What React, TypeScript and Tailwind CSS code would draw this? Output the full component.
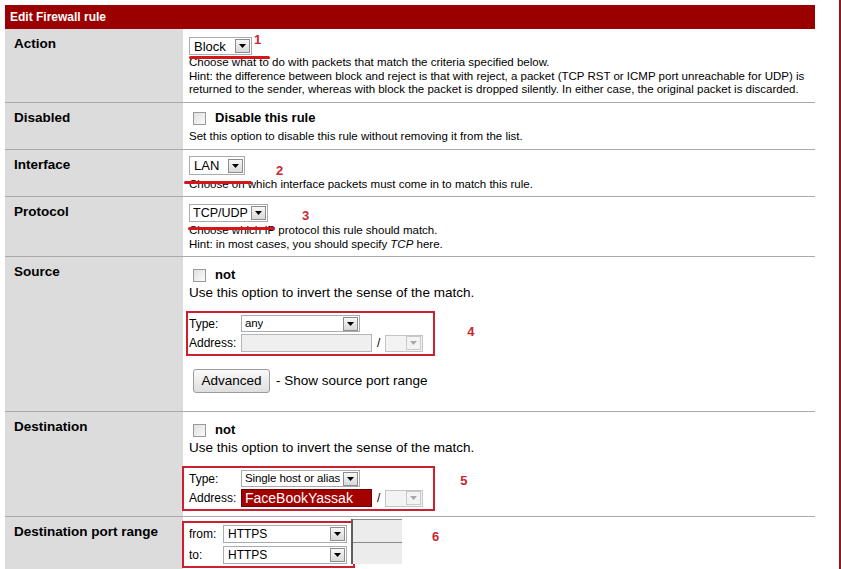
import React from 'react';

const Arrow: React.FC<{ disabled?: boolean }> = ({ disabled }) => (
  <div
    className={`flex h-[14px] w-[15px] shrink-0 items-center justify-center border ${
      disabled ? 'border-[#c9c9c9] bg-[#f3f3f3]' : 'border-[#8d8d8d] bg-gradient-to-b from-[#f7f7f7] to-[#d9d9d9]'
    }`}
  >
    <svg width="7" height="4" viewBox="0 0 7 4">
      <path d="M0 0h7L3.5 4z" fill={disabled ? '#a8a8a8' : '#000'} />
    </svg>
  </div>
);

const Select: React.FC<{ value: string; className: string; text?: string }> = ({ value, className, text = 'text-[13px]' }) => (
  <div className={`flex items-center justify-between border border-[#a5acb2] bg-white pl-[4px] pr-[1px] ${className}`}>
    <span className={`${text} leading-none text-black whitespace-nowrap overflow-hidden`}>{value}</span>
    <Arrow />
  </div>
);

const Checkbox: React.FC = () => (
  <div className="h-[13px] w-[13px] shrink-0 border border-[#9a9a9a] bg-gradient-to-br from-[#e0e0e0] to-[#fafafa]" />
);

const Note: React.FC<{ n: string; className: string }> = ({ n, className }) => (
  <span className={`text-[13px] font-bold leading-none text-[#c8262c] ${className}`}>{n}</span>
);

const Stroke: React.FC<{ className: string }> = ({ className }) => (
  <div className={`absolute h-[3px] rounded-full bg-[#d7161c] ${className}`} />
);

const Row: React.FC<{ label: string; h: string; children: React.ReactNode }> = ({ label, h, children }) => (
  <div className={`flex border-b border-[#a9a9a9] ${h}`}>
    <div className="w-[178px] shrink-0 bg-[#dcdcdc] pl-[9px] pt-[7px] text-[13.5px] font-bold leading-[16px] text-black">
      {label}
    </div>
    <div className="relative flex-1 pl-[6px]">{children}</div>
  </div>
);

const AddressBox: React.FC<{ type: string; address: string; filled?: boolean; box: string }> = ({ type, address, filled, box }) => (
  <div className={`flex flex-col gap-[2px] border-2 border-[#cf1f2e] py-[2px] pr-[10px] ${box}`}>
    <div className="flex items-center">
      <span className="w-[52px] text-[12px] leading-none">Type:</span>
      <Select value={type} className="h-[17px] w-[119px] !pl-[3px]" text="text-[11.5px] tracking-[-0.1px]" />
    </div>
    <div className="flex items-center">
      <span className="w-[52px] text-[12px] leading-none">Address:</span>
      <div
        className={`flex h-[18px] w-[131px] items-center border ${
          filled ? 'border-[#6d0000] bg-[#a30000]' : 'border-[#b5b5b5] bg-[#efefef]'
        } pl-[3px]`}
      >
        {filled && <span className="text-[14px] leading-none text-white">{address}</span>}
      </div>
      <span className="mx-[5px] text-[12px]">/</span>
      <div className="flex h-[17px] w-[38px] items-center justify-end border border-[#c4c4c4] bg-[#f3f3f3] pr-[1px]">
        <Arrow disabled />
      </div>
    </div>
  </div>
);

export default function App() {
  return (
    <div className="h-[569px] w-[841px] overflow-hidden border-r-2 border-[#8e1a1a] bg-white font-['Liberation_Sans',Arial,sans-serif] text-black">
      <div className="ml-[5px] mt-[5px] w-[810px]">
        <div className="flex h-[24px] items-center bg-[#9b0000] pl-[5px] text-[12px] font-bold text-white">
          Edit Firewall rule
        </div>

        <Row label="Action" h="h-[74px]">
          <div className="flex items-start pt-[8px]">
            <Select value="Block" className="h-[18px] w-[63px]" />
            <Note n="1" className="ml-[2px] -mt-[4px]" />
          </div>
          <Stroke className="left-[6px] top-[27px] w-[81px]" />
          <div className="whitespace-nowrap pt-[1px] text-[11.5px] leading-[13.5px]">
            <div>Choose what to do with packets that match the criteria specified below.</div>
            <div>Hint: the difference between block and reject is that with reject, a packet (TCP RST or ICMP port unreachable for UDP) is</div>
            <div>returned to the sender, whereas with block the packet is dropped silently. In either case, the original packet is discarded.</div>
          </div>
        </Row>

        <Row label="Disabled" h="h-[47px]">
          <div className="flex items-center gap-[9px] pl-[4px] pt-[8px]">
            <Checkbox />
            <span className="text-[13px] font-bold leading-[14px]">Disable this rule</span>
          </div>
          <div className="mt-[5px] text-[11.5px] leading-[13px]">Set this option to disable this rule without removing it from the list.</div>
        </Row>

        <Row label="Interface" h="h-[47px]">
          <div className="flex items-start pt-[6px]">
            <Select value="LAN" className="h-[19px] w-[56px]" />
            <Note n="2" className="ml-[31px] mt-[8px]" />
          </div>
          <Stroke className="left-[1px] top-[31px] w-[68px]" />
          <div className="mt-[1px] text-[11.5px] leading-[13px]">Choose on which interface packets must come in to match this rule.</div>
        </Row>

        <Row label="Protocol" h="h-[60px]">
          <div className="flex items-start pt-[7px]">
            <Select value="TCP/UDP" className="h-[18px] w-[79px] !pl-[3px]" text="text-[12.5px]" />
            <Note n="3" className="ml-[34px] mt-[5px]" />
          </div>
          <Stroke className="left-[5px] top-[30px] w-[87px]" />
          <div className="mt-[1px] text-[11.5px] leading-[14px]">
            <div>Choose which IP protocol this rule should match.</div>
            <div>
              Hint: in most cases, you should specify <i>TCP</i> here.
            </div>
          </div>
        </Row>

        <Row label="Source" h="h-[155px]">
          <div className="flex items-center gap-[9px] pl-[4px] pt-[11px]">
            <Checkbox />
            <span className="text-[13px] font-bold leading-[14px]">not</span>
          </div>
          <div className="mt-[3px] text-[13.5px] leading-[16px]">Use this option to invert the sense of the match.</div>
          <div className="mt-[10px] flex items-center">
            <AddressBox type="any" address="" box="-ml-[3px] pl-[1px]" />
            <Note n="4" className="ml-[32px] -mt-[4px]" />
          </div>
          <div className="mt-[13px] flex items-center pl-[4px]">
            <div className="flex h-[24px] w-[77px] items-center justify-center rounded-[3px] border border-[#9a9a9a] bg-gradient-to-b from-[#fafafa] to-[#dedede] text-[13.5px]">
              Advanced
            </div>
            <span className="ml-[6px] text-[13.5px]">- Show source port range</span>
          </div>
        </Row>

        <Row label="Destination" h="h-[105px]">
          <div className="flex items-center gap-[9px] pl-[4px] pt-[11px]">
            <Checkbox />
            <span className="text-[13px] font-bold leading-[14px]">not</span>
          </div>
          <div className="mt-[3px] text-[13.5px] leading-[16px]">Use this option to invert the sense of the match.</div>
          <div className="mt-[10px] flex items-center">
            <AddressBox type="Single host or alias" address="FaceBookYassak" filled box="-ml-[7px] pl-[5px]" />
            <Note n="5" className="ml-[25px] -mt-[16px]" />
          </div>
        </Row>

        <div className="flex h-[60px]">
          <div className="w-[178px] shrink-0 bg-[#dcdcdc] pl-[9px] pt-[7px] text-[13.5px] font-bold leading-[16px]">
            Destination port range
          </div>
          <div className="flex flex-1 items-start pl-[6px] pt-[4px]">
            <div className="-ml-[7px] flex flex-col gap-[3px] border-2 border-[#cf1f2e] py-[2px] pl-[5px] pr-[6px]">
              <div className="flex items-center">
                <span className="w-[34px] text-[12px] leading-none">from:</span>
                <Select value="HTTPS" className="h-[18px] w-[124px]" text="text-[12px]" />
              </div>
              <div className="flex items-center">
                <span className="w-[34px] text-[12px] leading-none">to:</span>
                <Select value="HTTPS" className="h-[18px] w-[124px]" text="text-[12px]" />
              </div>
            </div>
            <div className="-ml-[4px] -mt-[2px] flex w-[51px] flex-col border-l-2 border-[#5f5f5f]">
              <div className="h-[23px] border-t border-[#8a8a8a] bg-[#ececec]" />
              <div className="h-[22px] border-t border-[#8a8a8a] bg-[#ececec]" />
            </div>
            <Note n="6" className="ml-[30px] mt-[9px]" />
          </div>
        </div>
      </div>
    </div>
  );
}
